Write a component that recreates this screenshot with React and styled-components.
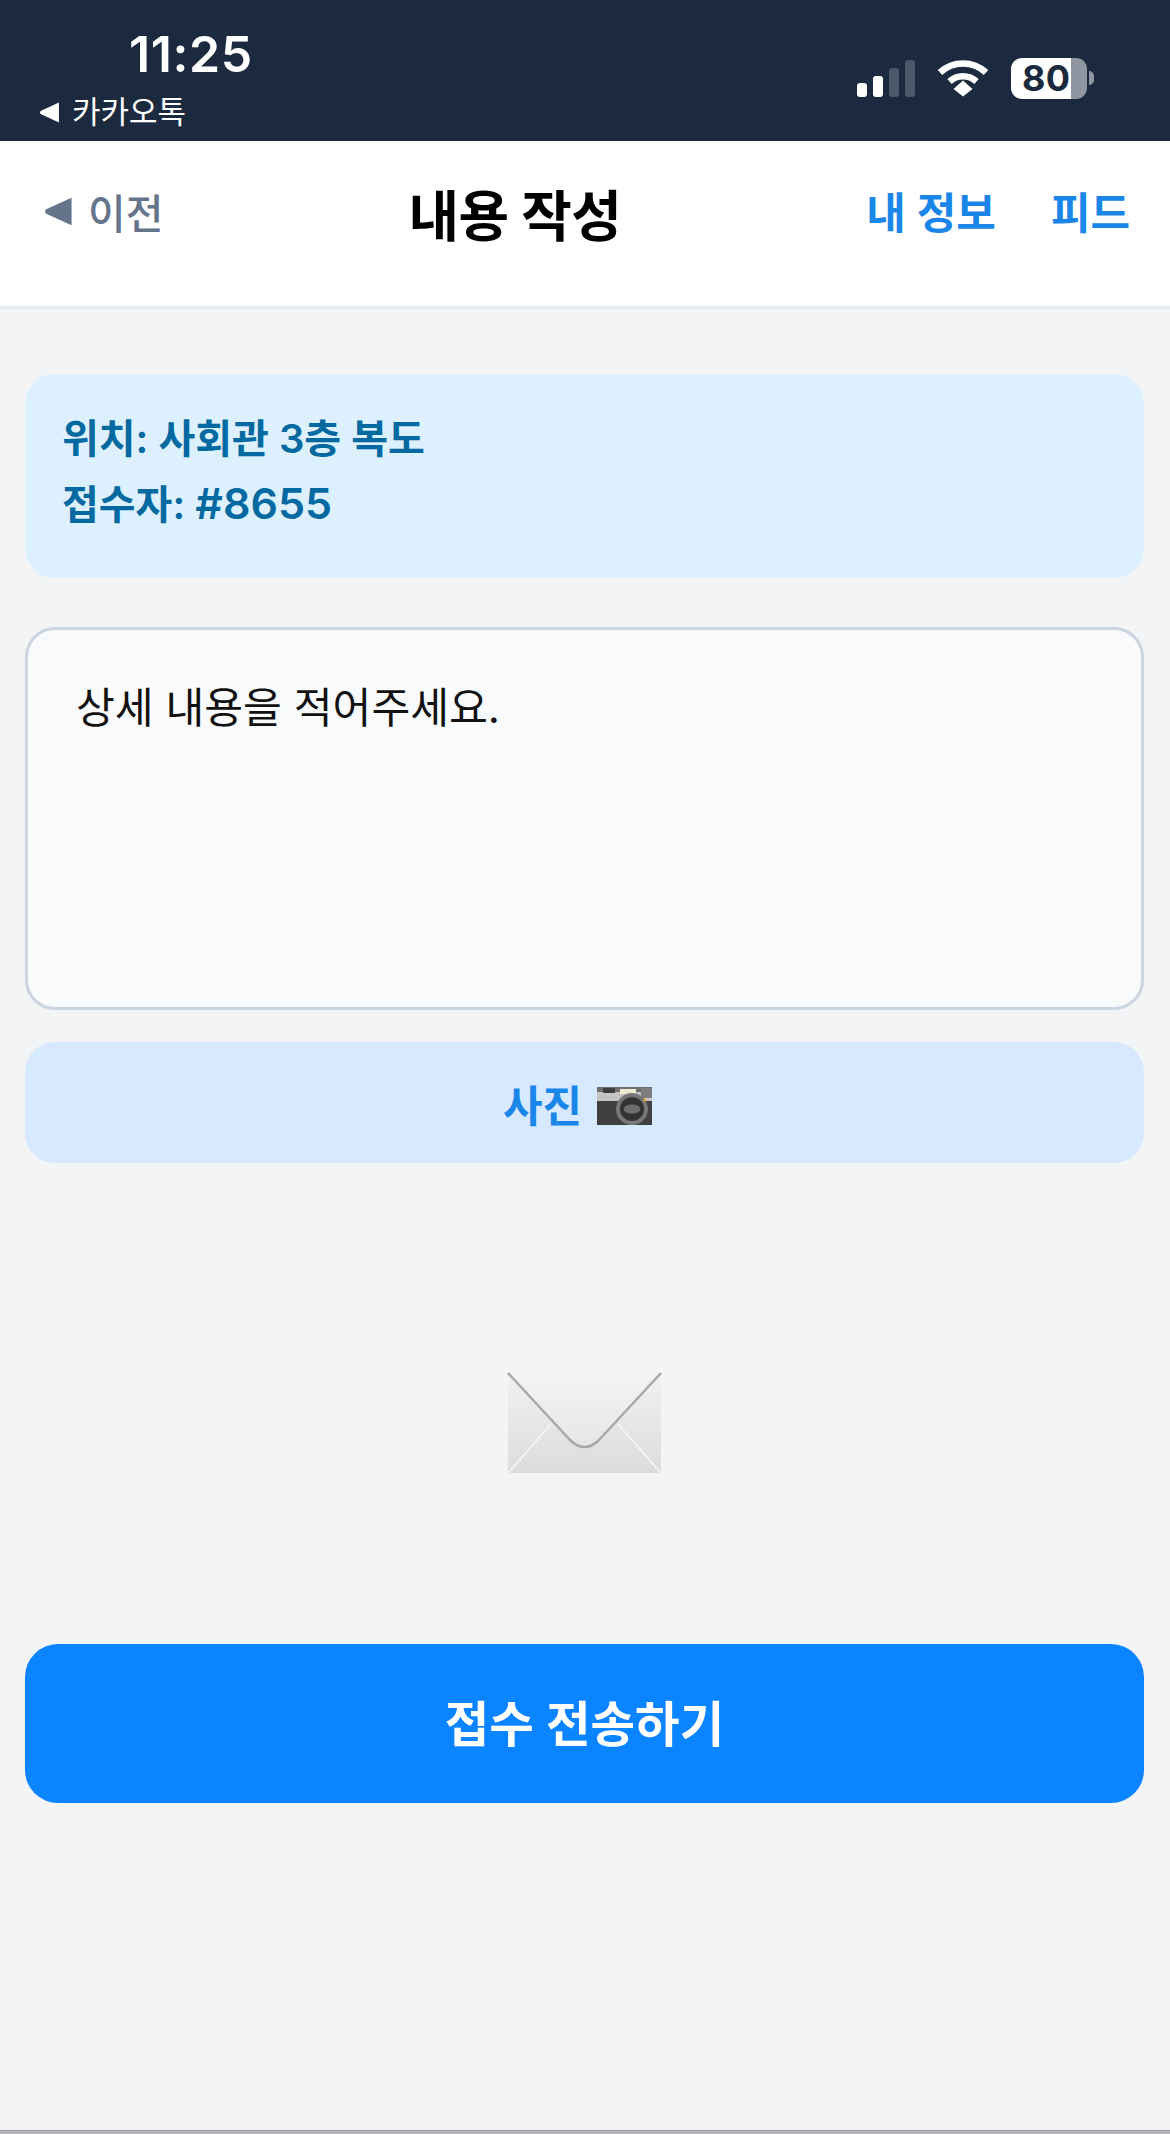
import styled, { createGlobalStyle } from "styled-components";

const GlobalStyle = createGlobalStyle`
  html, body {
    margin: 0;
    padding: 0;
    background: #f3f4f6;
  }
  * {
    box-sizing: border-box;
  }
`;

const fontStack = `Inter, "Noto Sans CJK KR", "Liberation Sans", sans-serif`;

const Page = styled.div`
  width: 1170px;
  height: 2134px;
  display: flex;
  flex-direction: column;
  background: #f3f4f6;
  font-family: ${fontStack};
  overflow: hidden;
`;

const StatusBar = styled.div`
  height: 141px;
  flex: none;
  background: #1c2a40;
  display: flex;
  justify-content: space-between;
  padding: 26px 76px 0 39px;
  color: #fff;
`;

const StatusLeft = styled.div`
  display: flex;
  flex-direction: column;
`;

const Clock = styled.div`
  font-size: 50px;
  line-height: 56px;
  font-weight: 600;
  margin-left: 90px;
  letter-spacing: 0.6px;
`;

const BackToApp = styled.div`
  display: flex;
  align-items: center;
  gap: 12px;
  font-size: 31px;
  line-height: 40px;
  margin-top: 10px;
`;

const StatusRight = styled.div`
  display: flex;
  align-items: center;
  height: 44px;
  margin-top: 30px;
`;

const SignalBars = styled.div`
  display: flex;
  align-items: flex-end;
  gap: 6px;
  height: 37px;
`;

const SignalBar = styled.span`
  width: 10px;
  height: ${({ $h }) => $h}px;
  border-radius: 3px;
  background: ${({ $on }) => ($on ? "#fff" : "#4c5868")};
`;

const WifiIcon = styled.svg`
  width: 52px;
  height: 38px;
  margin-left: 22px;
`;

const Battery = styled.div`
  width: 76px;
  height: 41px;
  margin-left: 22px;
  border-radius: 11px;
  background: linear-gradient(to right, #fff 0 60px, #8f96a2 60px);
  color: #1c2a40;
  font-size: 36px;
  font-weight: 700;
  line-height: 41px;
  padding-left: 11px;
  letter-spacing: 0.4px;
  white-space: nowrap;
`;

const BatteryCap = styled.span`
  width: 5px;
  height: 14px;
  margin-left: 2px;
  border-radius: 0 7px 7px 0;
  background: #8f96a2;
`;

const NavBar = styled.div`
  height: 168px;
  flex: none;
  background: #fff;
  border-bottom: 3px solid #e2ecef;
  display: flex;
  justify-content: space-between;
  align-items: flex-start;
  padding: 0 40px 0 44px;
`;

const BackLink = styled.div`
  display: flex;
  align-items: center;
  gap: 15px;
  height: 44px;
  margin-top: 48px;
  color: #64748b;
  font-size: 41px;
  font-weight: 500;
`;

const Title = styled.div`
  margin-top: 41px;
  font-size: 55px;
  line-height: 68px;
  font-weight: 700;
  color: #000;
  letter-spacing: -0.5px;
`;

const NavLinks = styled.div`
  display: flex;
  gap: 55px;
  height: 44px;
  margin-top: 50px;
  color: #1a86e8;
  font-size: 43px;
  line-height: 44px;
  font-weight: 600;
`;

const Content = styled.div`
  display: flex;
  flex-direction: column;
  padding: 65px 26px 0 25px;
`;

const InfoBox = styled.div`
  height: 204px;
  background: #dcf0fe;
  border-radius: 30px;
  padding: 32px 37px;
  color: #0369a1;
  font-size: 40px;
  line-height: 66px;
  font-weight: 600;
`;

const ReporterNumber = styled.span`
  font-size: 43px;
  line-height: 1;
`;

const DetailField = styled.div`
  height: 383px;
  margin-top: 49px;
  background: #f8fafc;
  border: 3px solid #cbd5e1;
  border-radius: 30px;
  padding: 49px 48px;
  color: #111;
  font-size: 42.2px;
  line-height: 58px;
`;

const PhotoButton = styled.div`
  height: 121px;
  margin-top: 32px;
  padding-right: 14px;
  background: #d6e9ff;
  border-radius: 30px;
  display: flex;
  align-items: center;
  justify-content: center;
  gap: 15px;
  color: #1a86e8;
  font-size: 43px;
  font-weight: 600;
`;

const CameraIcon = styled.svg`
  width: 55px;
  height: 38px;
  margin-top: 6px;
`;

const EnvelopeArea = styled.div`
  height: 481px;
  display: flex;
  align-items: flex-start;
  justify-content: center;
  padding-top: 209px;
`;

const EnvelopeIcon = styled.svg`
  width: 155px;
  height: 102px;
`;

const SubmitButton = styled.div`
  height: 159px;
  background: #0a84ff;
  border-radius: 33px;
  display: flex;
  align-items: center;
  justify-content: center;
  padding-bottom: 5px;
  color: #fff;
  font-size: 48.4px;
  font-weight: 600;
`;

const BottomEdge = styled.div`
  height: 4px;
  flex: none;
  margin-top: auto;
  background: #b4b6ba;
  border-top: 1px solid #989b9f;
`;

function Triangle({ size, color }) {
  return (
    <svg width={size} height={size} viewBox="0 0 20 20">
      <path d="M19 0.5 L19 19.5 L1.5 11.5 Q0 10 1.5 8.5 Z" fill={color} />
    </svg>
  );
}

function Wifi() {
  return (
    <WifiIcon viewBox="0 0 52 38" fill="none" stroke="#fff" strokeWidth="6.5">
      <path d="M3 13.5 C16 1.5 36 1.5 49 13.5" />
      <path d="M12.5 22.5 C20 15.5 32 15.5 39.5 22.5" />
      <path d="M16.5 30 L26 21.5 L35.5 30 L26 37.5 Z" stroke="none" fill="#fff" />
    </WifiIcon>
  );
}

function Camera() {
  return (
    <CameraIcon viewBox="0 0 55 38">
      <rect x="0" y="0" width="55" height="38" rx="1.5" fill="#9c9c9c" />
      <rect x="0" y="0" width="55" height="5" fill="#6f6f70" />
      <rect x="0" y="5" width="55" height="9" fill="#c4c4c4" />
      <rect x="0" y="14" width="55" height="24" fill="#403f41" />
      <rect x="6" y="1" width="12" height="5" fill="#3d3d3f" />
      <rect x="23" y="2" width="16" height="5" fill="#efe9cf" />
      <rect x="44" y="1" width="11" height="10" fill="#7e7e7e" />
      <circle cx="35" cy="22" r="16" fill="#77777a" />
      <circle cx="35" cy="22" r="12" fill="#333335" />
      <ellipse cx="35" cy="22" rx="8.5" ry="4.5" fill="#6d6d70" />
      <circle cx="48" cy="13" r="1.5" fill="#e0a92e" />
    </CameraIcon>
  );
}

function Envelope() {
  return (
    <EnvelopeIcon viewBox="0 0 155 102">
      <defs>
        <linearGradient id="envBody" x1="0" y1="0" x2="0" y2="1">
          <stop offset="0" stopColor="#f1f1f2" />
          <stop offset="1" stopColor="#dcdcdd" />
        </linearGradient>
        <linearGradient id="envFlap" x1="0" y1="0" x2="0" y2="1">
          <stop offset="0" stopColor="#f4f4f5" />
          <stop offset="1" stopColor="#e6e6e7" />
        </linearGradient>
      </defs>
      <rect x="1" y="1" width="153" height="100" rx="3" fill="url(#envBody)" />
      <path d="M2 100 L44 52 M153 100 L111 52" stroke="#f8f8f8" strokeWidth="1.5" fill="none" />
      <path d="M1 1 L63 68 Q77.5 82 92 68 L154 1 Z" fill="url(#envFlap)" />
      <path
        d="M1 1 L63 68 Q77.5 82 92 68 L154 1"
        fill="none"
        stroke="#a8a8aa"
        strokeWidth="2.5"
      />
    </EnvelopeIcon>
  );
}

export default function App() {
  return (
    <Page>
      <GlobalStyle />
      <StatusBar>
        <StatusLeft>
          <Clock>11:25</Clock>
          <BackToApp>
            <Triangle size={21} color="#fff" />
            카카오톡
          </BackToApp>
        </StatusLeft>
        <StatusRight>
          <SignalBars>
            <SignalBar $h={14} $on />
            <SignalBar $h={21} $on />
            <SignalBar $h={29} />
            <SignalBar $h={37} />
          </SignalBars>
          <Wifi />
          <Battery>80</Battery>
          <BatteryCap />
        </StatusRight>
      </StatusBar>
      <NavBar>
        <BackLink>
          <Triangle size={29} color="#64748b" />
          이전
        </BackLink>
        <Title>내용 작성</Title>
        <NavLinks>
          <span>내 정보</span>
          <span>피드</span>
        </NavLinks>
      </NavBar>
      <Content>
        <InfoBox>
          <div>위치: 사회관 3층 복도</div>
          <div>
            접수자: <ReporterNumber>#8655</ReporterNumber>
          </div>
        </InfoBox>
        <DetailField>상세 내용을 적어주세요.</DetailField>
        <PhotoButton>
          사진
          <Camera />
        </PhotoButton>
        <EnvelopeArea>
          <Envelope />
        </EnvelopeArea>
        <SubmitButton>접수 전송하기</SubmitButton>
      </Content>
      <BottomEdge />
    </Page>
  );
}
